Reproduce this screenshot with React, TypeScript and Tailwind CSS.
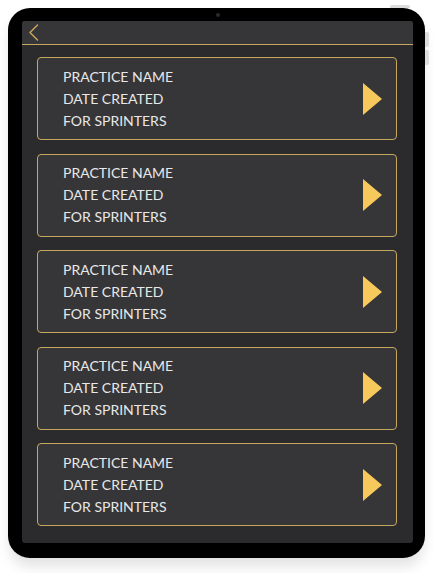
import React from 'react';

const practices = [1, 2, 3, 4, 5].map((id) => ({
  id,
  name: 'PRACTICE NAME',
  created: 'DATE CREATED',
  group: 'FOR SPRINTERS',
}));

function BackChevron() {
  return (
    <svg width="11" height="17" viewBox="0 0 11 17" fill="none">
      <path d="M9.5 1 L2 8.5 L9.5 16" stroke="#c9a95c" strokeWidth="1.4" strokeLinecap="round" strokeLinejoin="round" />
    </svg>
  );
}

function PlayArrow() {
  return (
    <svg width="19" height="32" viewBox="0 0 19 32">
      <polygon points="0,0 19,16 0,32" fill="#f7c95c" />
    </svg>
  );
}

export default function App() {
  return (
    <div className="relative w-[436px] h-[573px] overflow-hidden bg-white font-['Lato','Open_Sans',sans-serif]">
      {/* device */}
      <div className="relative ml-[8px] mt-[8px] w-[417px] h-[550px] rounded-[22px] bg-black pl-[14px] pr-[12px] pt-[13px] pb-[15px] shadow-[0_10px_14px_-2px_rgba(0,0,0,0.12)]">
        {/* top button + side buttons */}
        <div className="absolute left-[382px] top-[-3px] w-[20px] h-[3px] rounded-t-[2px] bg-[#dcdcdc]" />
        <div className="absolute right-[-4px] top-[24px] w-[4px] h-[15px] rounded-r-[2px] bg-[#dcdcdc]" />
        <div className="absolute right-[-4px] top-[42px] w-[4px] h-[15px] rounded-r-[2px] bg-[#dcdcdc]" />
        {/* camera */}
        <div className="absolute left-[208px] top-[5px] w-[4px] h-[4px] rounded-full bg-[#2a2a30]" />

        <div className="flex flex-col h-full rounded-[3px] bg-[#2b2b2d] overflow-hidden">
          <div className="flex items-center h-[24px] shrink-0 pl-[6px] bg-[#363638] border-b-[1.5px] border-[#c6a75e]">
            <BackChevron />
          </div>

          <div className="flex flex-col gap-[13.5px] pt-[12px] pl-[15px] pr-[16px]">
            {practices.map((p) => (
              <div
                key={p.id}
                className="flex items-center justify-between h-[83px] pl-[25px] pr-[14px] rounded-[4px] border border-[#c6a75e] bg-[#363638]"
              >
                <div className="text-[14px] leading-[22px] text-[#e8e8e8]">
                  <div>{p.name}</div>
                  <div>{p.created}</div>
                  <div>{p.group}</div>
                </div>
                <PlayArrow />
              </div>
            ))}
          </div>
        </div>
      </div>
    </div>
  );
}
